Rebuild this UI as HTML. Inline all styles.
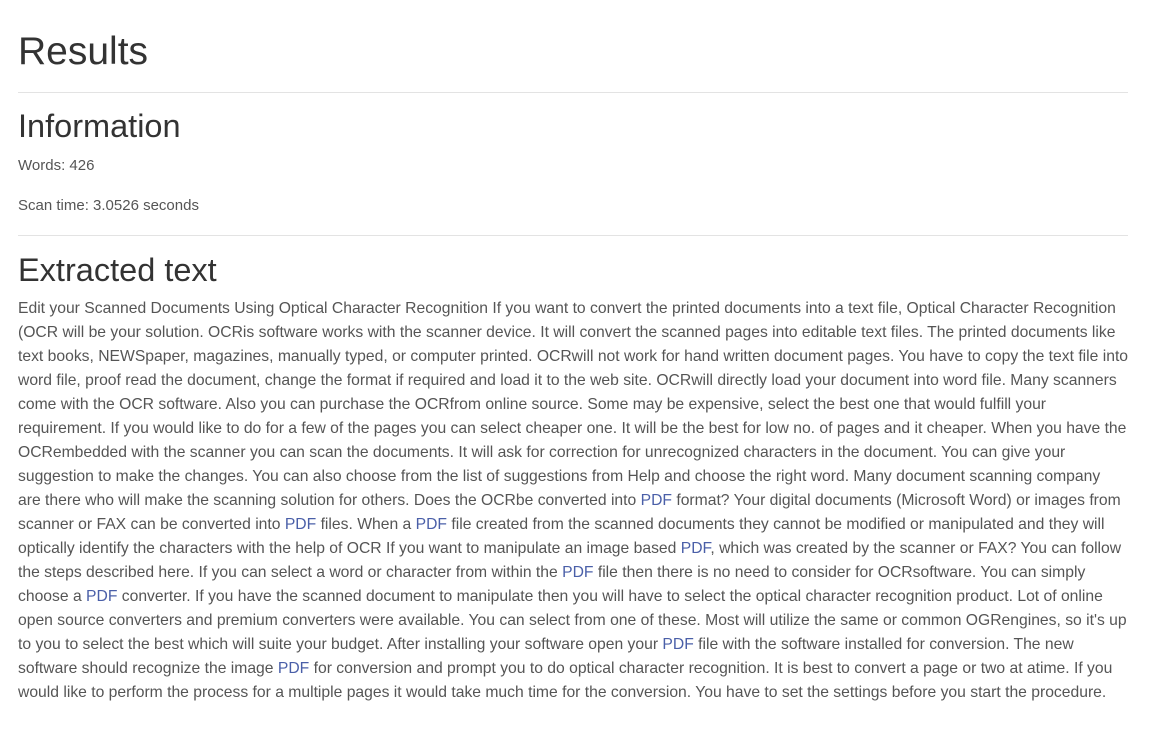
<!DOCTYPE html>
<html><head><meta charset="utf-8"><style>
body{margin:0;background:#fff;color:#333;font-family:"Liberation Sans",sans-serif;font-weight:300}
h1,h2{margin:0;font-weight:normal;color:#333;position:absolute;left:18px;white-space:nowrap}
h1{font-size:39px;top:30px}
h2{font-size:32.5px}
hr{position:absolute;left:18px;width:1110px;margin:0;border:0;border-top:1px solid #e3e3e3}
.p{position:absolute;left:18px;font-size:15px;white-space:nowrap;color:#555}
.t div{height:24px;line-height:24px;white-space:nowrap;font-size:15.7px;color:#555}
.t{position:absolute;left:18px;top:297px}
a{color:#4a5fa8;text-decoration:none}
</style></head><body>
<h1>Results</h1>
<hr style="top:92px">
<h2 style="top:108px">Information</h2>
<div class="p" style="top:157px">Words: 426</div>
<div class="p" style="top:197px">Scan time: 3.0526 seconds</div>
<hr style="top:235px">
<h2 style="top:252px">Extracted text</h2>
<div class="t">
<div>Edit your Scanned Documents Using Optical Character Recognition If you want to convert the printed documents into a text file, Optical Character Recognition</div>
<div>(OCR will be your solution. OCRis software works with the scanner device. It will convert the scanned pages into editable text files. The printed documents like</div>
<div>text books, NEWSpaper, magazines, manually typed, or computer printed. OCRwill not work for hand written document pages. You have to copy the text file into</div>
<div>word file, proof read the document, change the format if required and load it to the web site. OCRwill directly load your document into word file. Many scanners</div>
<div>come with the OCR software. Also you can purchase the OCRfrom online source. Some may be expensive, select the best one that would fulfill your</div>
<div>requirement. If you would like to do for a few of the pages you can select cheaper one. It will be the best for low no. of pages and it cheaper. When you have the</div>
<div>OCRembedded with the scanner you can scan the documents. It will ask for correction for unrecognized characters in the document. You can give your</div>
<div>suggestion to make the changes. You can also choose from the list of suggestions from Help and choose the right word. Many document scanning company</div>
<div>are there who will make the scanning solution for others. Does the OCRbe converted into <a>PDF</a> format? Your digital documents (Microsoft Word) or images from</div>
<div>scanner or FAX can be converted into <a>PDF</a> files. When a <a>PDF</a> file created from the scanned documents they cannot be modified or manipulated and they will</div>
<div>optically identify the characters with the help of OCR If you want to manipulate an image based <a>PDF</a>, which was created by the scanner or FAX? You can follow</div>
<div>the steps described here. If you can select a word or character from within the <a>PDF</a> file then there is no need to consider for OCRsoftware. You can simply</div>
<div>choose a <a>PDF</a> converter. If you have the scanned document to manipulate then you will have to select the optical character recognition product. Lot of online</div>
<div>open source converters and premium converters were available. You can select from one of these. Most will utilize the same or common OGRengines, so it's up</div>
<div>to you to select the best which will suite your budget. After installing your software open your <a>PDF</a> file with the software installed for conversion. The new</div>
<div>software should recognize the image <a>PDF</a> for conversion and prompt you to do optical character recognition. It is best to convert a page or two at atime. If you</div>
<div>would like to perform the process for a multiple pages it would take much time for the conversion. You have to set the settings before you start the procedure.</div>
</div>
</body></html>
